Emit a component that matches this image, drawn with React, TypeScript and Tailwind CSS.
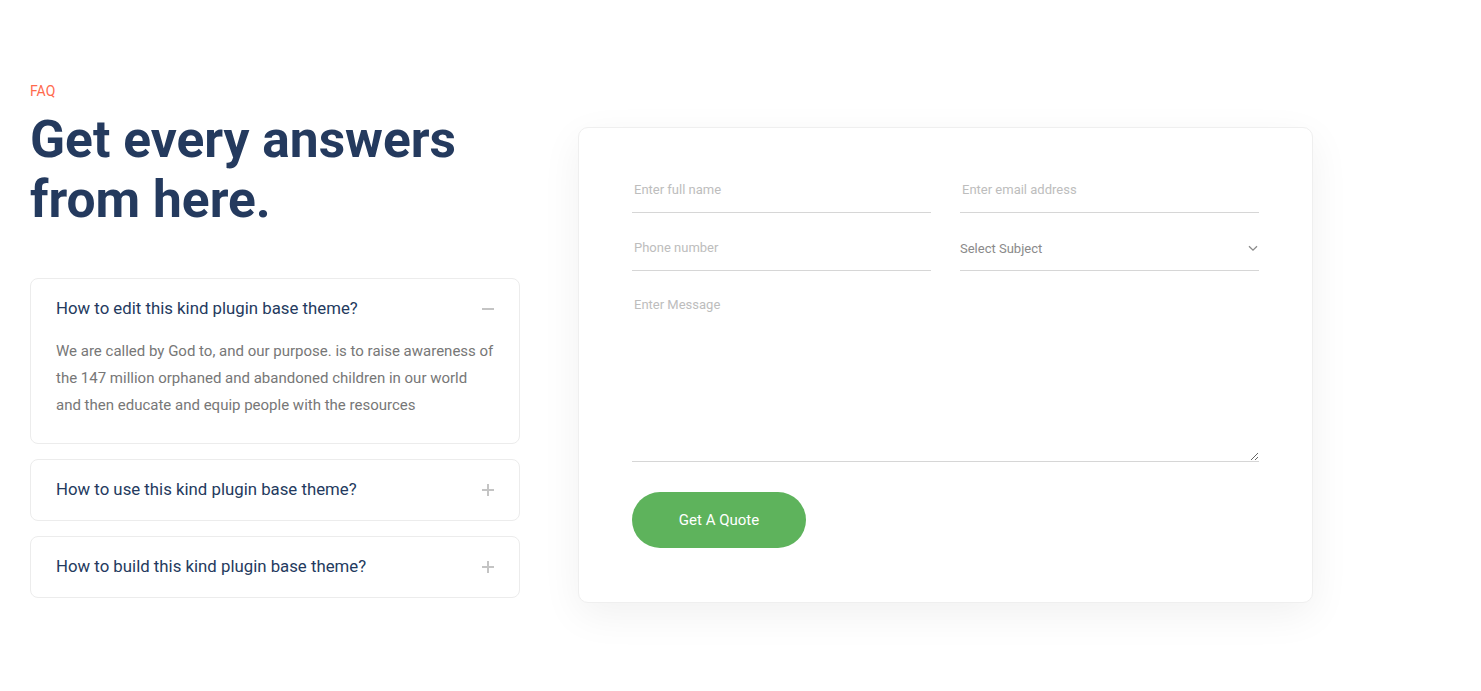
import { useState } from "react"

const faqs = [
    {
        q: "How to edit this kind plugin base theme?",
        a: ["We are called by God to, and our purpose. is to raise awareness of", "the 147 million orphaned and abandoned children in our world", "and then educate and equip people with the resources"],
    },
    { q: "How to use this kind plugin base theme?", a: [] },
    { q: "How to build this kind plugin base theme?", a: [] },
]

export default function App() {
    const [open, setOpen] = useState(0)

    return (
        <div className="min-h-screen bg-white font-['Roboto',sans-serif]">
            <section className="flex items-start gap-[58px] pl-[30px] pt-[81px]">
                {/* Left: FAQ */}
                <div className="w-[490px] shrink-0">
                    <p className="text-[14px] leading-[20px] text-[#ff6a4d]">FAQ</p>
                    <h2 className="mt-[9px] text-[51.5px] leading-[60px] font-bold text-[#243a5e]">
                        Get every answers
                        <br />
                        from here.
                    </h2>

                    <div className="mt-[48px] flex flex-col gap-[15.5px]">
                        {faqs.map((f, i) => (
                            <div key={i} className="rounded-[8px] border border-[#ececec] bg-white">
                                <button
                                    onClick={() => setOpen(open === i ? -1 : i)}
                                    className="flex w-full items-center justify-between pl-[25px] pr-[25px] py-[18px] text-left"
                                >
                                    <span className="text-[16.8px] leading-[23.5px] text-[#243a5e]">{f.q}</span>
                                    <span className="relative block h-[12px] w-[12px]">
                                        <span className="absolute left-0 top-[5px] h-[2px] w-[12px] bg-[#c4c4c4]" />
                                        {open !== i && (
                                            <span className="absolute left-[5px] top-0 h-[12px] w-[2px] bg-[#c4c4c4]" />
                                        )}
                                    </span>
                                </button>
                                {open === i && f.a.length > 0 && (
                                    <div className="-mt-[1px] pl-[25px] pr-[20px] pb-[24px] text-[15px] leading-[27px] text-[#777777]">
                                        {f.a.map((line, j) => (
                                            <div key={j}>{line}</div>
                                        ))}
                                    </div>
                                )}
                            </div>
                        ))}
                    </div>
                </div>

                {/* Right: form card */}
                <div className="mt-[46px] w-[735px] shrink-0 rounded-[10px] border border-[#efefef] bg-white px-[53px] pt-[39px] pb-[54px] shadow-[0_12px_40px_rgba(0,0,0,0.06)]">
                    <div className="grid grid-cols-2 gap-x-[29px] gap-y-[12px]">
                        <input
                            placeholder="Enter full name"
                            className="h-[46px] border-b border-[#d6d6d6] px-[2px] text-[13px] text-[#555] outline-none placeholder:text-[#bdbdbd]"
                        />
                        <input
                            placeholder="Enter email address"
                            className="h-[46px] border-b border-[#d6d6d6] px-[2px] text-[13px] text-[#555] outline-none placeholder:text-[#bdbdbd]"
                        />
                        <input
                            placeholder="Phone number"
                            className="h-[46px] border-b border-[#d6d6d6] px-[2px] text-[13px] text-[#555] outline-none placeholder:text-[#bdbdbd]"
                        />
                        <div className="relative flex h-[46px] items-center border-b border-[#d6d6d6]">
                            <span className="pt-[2px] text-[13px] text-[#8a8a8a]">Select Subject</span>
                            <svg className="absolute right-[1px] top-[20px]" width="10" height="7" viewBox="0 0 10 7" fill="none">
                                <path d="M1 1.2 5 5.2 9 1.2" stroke="#8a8a8a" strokeWidth="1.3" />
                            </svg>
                        </div>
                    </div>

                    <textarea
                        placeholder="Enter Message"
                        className="mt-[12px] block h-[179px] w-full border-b border-[#d6d6d6] px-[2px] pt-[12px] text-[13px] text-[#555] outline-none placeholder:text-[#bdbdbd]"
                    />

                    <button className="mt-[30px] h-[56px] w-[174px] rounded-full bg-[#5eb35c] text-[15px] text-white">
                        Get A Quote
                    </button>
                </div>
            </section>
        </div>
    )
}
